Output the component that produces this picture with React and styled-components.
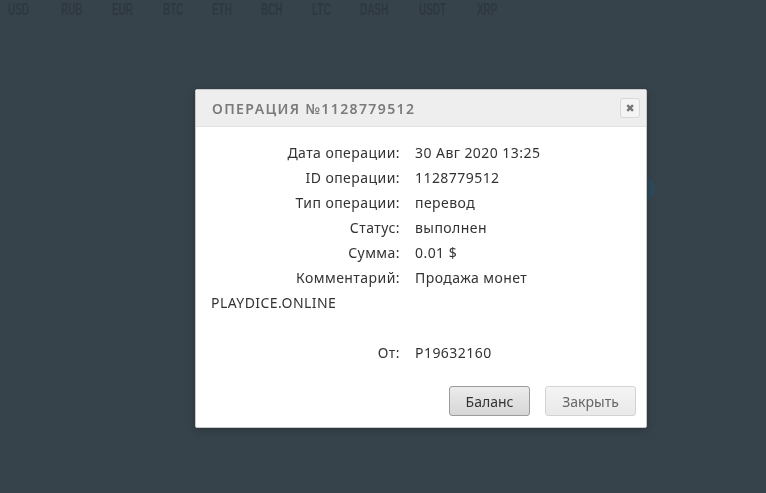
import React from 'react';
import styled, { createGlobalStyle } from 'styled-components';

const GlobalStyle = createGlobalStyle`
  html, body {
    margin: 0;
    padding: 0;
    background: #37434b;
    height: 100%;
  }
  #root {
    height: 100%;
  }
`;

const Page = styled.div`
  height: 493px;
  background: #37434b;
  overflow: hidden;
  font-family: "Noto Sans", sans-serif;
`;

const Tabs = styled.div`
  display: flex;
  gap: 30.5px;
  padding: 1px 0 0 8px;
`;

const Tab = styled.span`
  display: inline-block;
  width: ${props => props.width}px;
  white-space: nowrap;
  font-family: "Liberation Sans", sans-serif;
  font-weight: bold;
  font-size: 16px;
  line-height: 18px;
  color: #2d383f;
  transform: scaleX(0.62);
  transform-origin: left center;
`;

const Content = styled.div`
  display: flex;
  justify-content: flex-end;
  padding: 157px 111px 0 0;
`;

const Round = styled.div`
  width: 26px;
  height: 26px;
  border-radius: 50%;
  background: #2f4a5a;
`;

const Overlay = styled.div`
  position: fixed;
  inset: 0;
  display: flex;
  align-items: flex-start;
  padding: 89px 0 0 195px;
`;

const Dialog = styled.div`
  width: 450px;
  background: #fff;
  border: 1px solid #c8c8c8;
  border-radius: 2px;
  box-shadow: 0 2px 8px rgba(0, 0, 0, 0.25);
  font-family: "Noto Sans", sans-serif;
  color: #333;
`;

const Header = styled.div`
  display: flex;
  align-items: center;
  justify-content: space-between;
  height: 36px;
  padding: 0 6px 0 16px;
  background: #eeeeee;
  border-bottom: 1px solid #e2e2e2;
`;

const Title = styled.div`
  font-size: 14px;
  font-weight: 600;
  letter-spacing: 1.4px;
  color: #7b7b7b;
`;

const CloseButton = styled.button`
  width: 20px;
  height: 20px;
  padding: 0;
  display: flex;
  align-items: center;
  justify-content: center;
  border: 1px solid #d8d8d8;
  border-radius: 3px;
  background: #f4f4f4;
  color: #777;
  font-size: 11px;
  line-height: 1;
  font-family: "DejaVu Sans", sans-serif;
`;

const Body = styled.div`
  padding: 13px 16px 0 15px;
  font-size: 14px;
  line-height: 25px;
  letter-spacing: 0.45px;
`;

const Row = styled.div`
  display: grid;
  grid-template-columns: 189px 1fr;
  column-gap: 15px;
`;

const Label = styled.div`
  text-align: right;
`;

const Value = styled.div``;

const Line = styled.div`
  min-height: 25px;
`;

const Footer = styled.div`
  display: flex;
  justify-content: flex-end;
  gap: 15px;
  padding: 21px 10px 11px 0;
`;

const Button = styled.button`
  height: 30px;
  padding: 0 13px;
  border-radius: 3px;
  font-family: "Noto Sans", sans-serif;
  font-size: 14px;
  width: ${props => props.width}px;
  border: 1px solid ${props => (props.primary ? '#9b9b9b' : '#d3d3d3')};
  color: ${props => (props.primary ? '#333' : '#666')};
  background: ${props => (props.primary
    ? 'linear-gradient(#ececec, #d6d6d6)'
    : 'linear-gradient(#f4f4f4, #e9e9e9)')};
`;

const currencies = [
  ['USD', 22], ['RUB', 21], ['EUR', 20], ['BTC', 19], ['ETH', 18],
  ['BCH', 21], ['LTC', 17], ['DASH', 29], ['USDT', 27], ['XRP', 20],
];

const details = [
  ['Дата операции:', '30 Авг 2020 13:25'],
  ['ID операции:', '1128779512'],
  ['Тип операции:', 'перевод'],
  ['Статус:', 'выполнен'],
  ['Сумма:', '0.01 $'],
  ['Комментарий:', 'Продажа монет'],
];

const App = () => (
  <Page>
    <GlobalStyle />
    <Tabs>
      {currencies.map(([c, w]) => <Tab key={c} width={w}>{c}</Tab>)}
    </Tabs>
    <Content>
      <Round />
    </Content>
    <Overlay>
      <Dialog>
        <Header>
          <Title>ОПЕРАЦИЯ №1128779512</Title>
          <CloseButton type="button">✖</CloseButton>
        </Header>
        <Body>
          {details.map(([label, value]) => (
            <Row key={label}>
              <Label>{label}</Label>
              <Value>{value}</Value>
            </Row>
          ))}
          <Line>PLAYDICE.ONLINE</Line>
          <Line />
          <Row>
            <Label>От:</Label>
            <Value>P19632160</Value>
          </Row>
        </Body>
        <Footer>
          <Button type="button" primary width={81}>Баланс</Button>
          <Button type="button" width={91}>Закрыть</Button>
        </Footer>
      </Dialog>
    </Overlay>
  </Page>
);

export default App;
